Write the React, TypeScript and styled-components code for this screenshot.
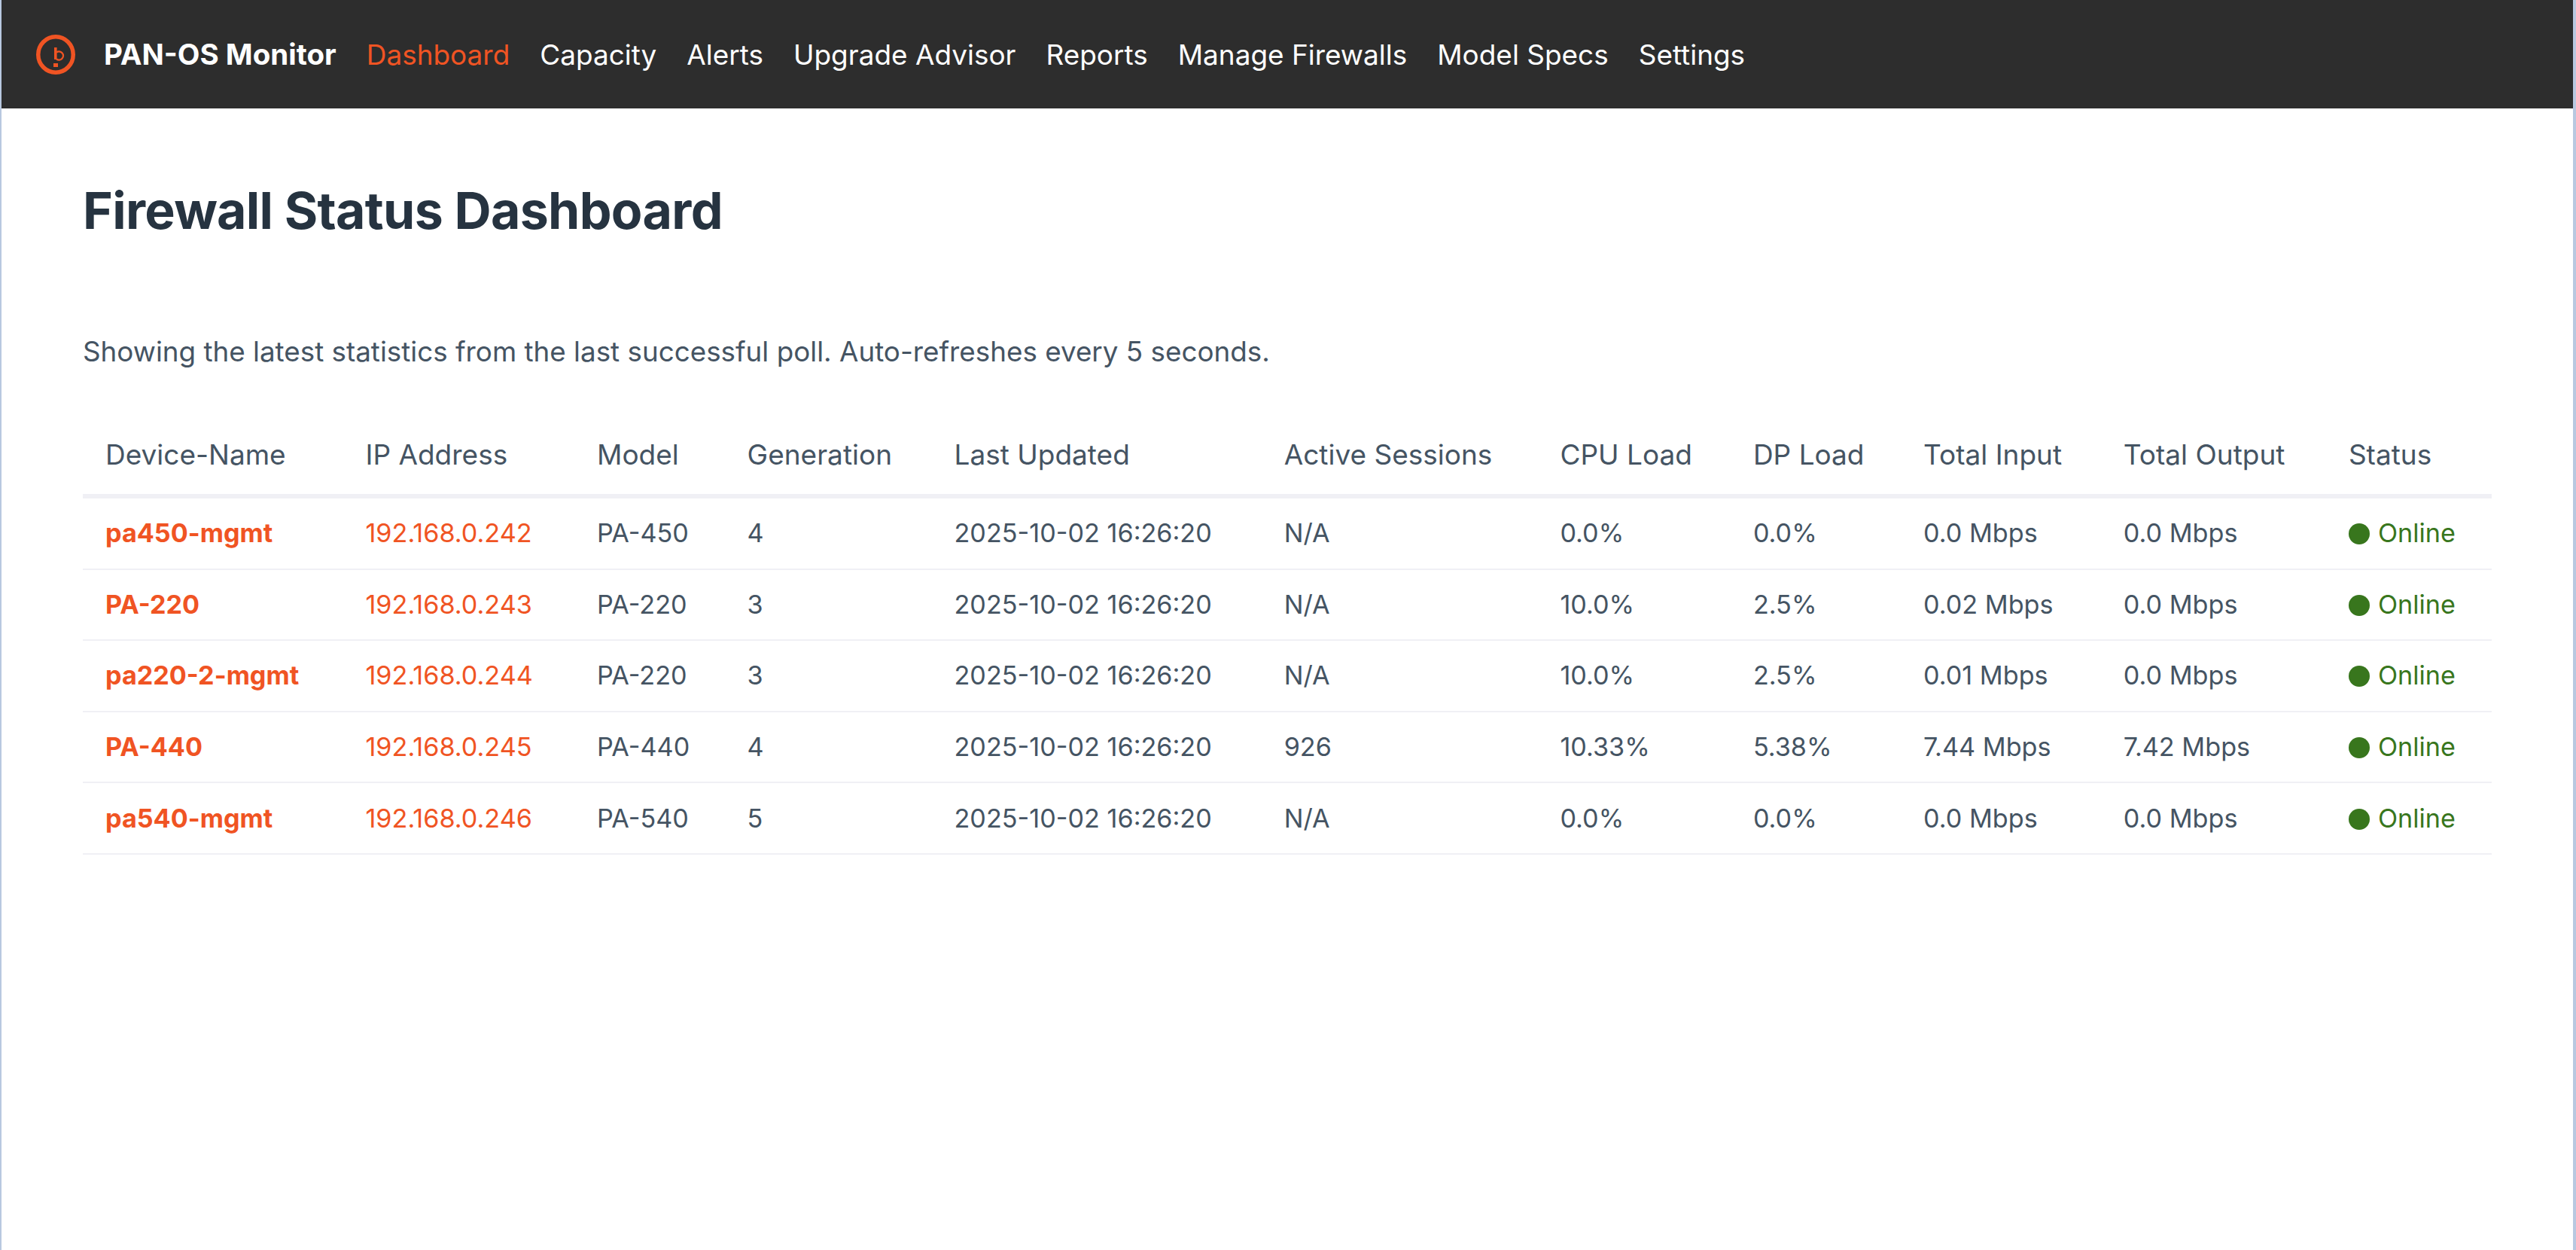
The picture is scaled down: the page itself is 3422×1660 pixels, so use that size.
import * as React from 'react'
import styled, { createGlobalStyle } from 'styled-components'

const ORANGE = '#f05423'
const NAV_LINKS = [
  'Dashboard',
  'Capacity',
  'Alerts',
  'Upgrade Advisor',
  'Reports',
  'Manage Firewalls',
  'Model Specs',
  'Settings',
]
const HEADERS = [
  'Device-Name',
  'IP Address',
  'Model',
  'Generation',
  'Last Updated',
  'Active Sessions',
  'CPU Load',
  'DP Load',
  'Total Input',
  'Total Output',
  'Status',
]
const DEVICES = [
  ['pa450-mgmt', '192.168.0.242', 'PA-450', '4', 'N/A', '0.0%', '0.0%', '0.0 Mbps', '0.0 Mbps'],
  ['PA-220', '192.168.0.243', 'PA-220', '3', 'N/A', '10.0%', '2.5%', '0.02 Mbps', '0.0 Mbps'],
  ['pa220-2-mgmt', '192.168.0.244', 'PA-220', '3', 'N/A', '10.0%', '2.5%', '0.01 Mbps', '0.0 Mbps'],
  ['PA-440', '192.168.0.245', 'PA-440', '4', '926', '10.33%', '5.38%', '7.44 Mbps', '7.42 Mbps'],
  ['pa540-mgmt', '192.168.0.246', 'PA-540', '5', 'N/A', '0.0%', '0.0%', '0.0 Mbps', '0.0 Mbps'],
]

const App: React.FC = () => {
  return (
    <>
      <GlobalStyle />
      <Page>
        <NavBar>
          <Logo viewBox="0 0 52 53" aria-hidden="true">
            <ellipse cx="26" cy="26.5" rx="23.25" ry="23.75" fill="none" stroke={ORANGE} strokeWidth="5.5" />
            <rect x="24" y="17" width="3.6" height="16" fill={ORANGE} />
            <rect x="23" y="38" width="6" height="5" fill={ORANGE} />
            <path d="M27 23.5a5.6 5.6 0 1 1 0 9" fill="none" stroke={ORANGE} strokeWidth="2.4" />
          </Logo>
          <Brand>PAN-OS Monitor</Brand>
          {NAV_LINKS.map((link, i) => (
            <NavLink key={link} $active={i === 0}>
              {link}
            </NavLink>
          ))}
        </NavBar>
        <Main>
          <Title>Firewall Status Dashboard</Title>
          <Intro>Showing the latest statistics from the last successful poll. Auto-refreshes every 5 seconds.</Intro>
          <Table>
            <thead>
              <tr>
                {HEADERS.map((h) => (
                  <HeadCell key={h}>{h}</HeadCell>
                ))}
              </tr>
            </thead>
            <tbody>
              {DEVICES.map((d) => (
                <tr key={d[0]}>
                  <Cell>
                    <DeviceLink>{d[0]}</DeviceLink>
                  </Cell>
                  <Cell>
                    <IpLink>{d[1]}</IpLink>
                  </Cell>
                  <Cell>{d[2]}</Cell>
                  <Cell>{d[3]}</Cell>
                  <Cell>2025-10-02 16:26:20</Cell>
                  <Cell>{d[4]}</Cell>
                  <Cell>{d[5]}</Cell>
                  <Cell>{d[6]}</Cell>
                  <Cell>{d[7]}</Cell>
                  <Cell>{d[8]}</Cell>
                  <Cell>
                    <StatusDot />
                    <StatusText>Online</StatusText>
                  </Cell>
                </tr>
              ))}
            </tbody>
          </Table>
        </Main>
      </Page>
    </>
  )
}

export default App

const GlobalStyle = createGlobalStyle`
  html, body {
    margin: 0;
    padding: 0;
    background: #fff;
  }
  body {
    font-family: Inter, "Liberation Sans", sans-serif;
  }
`

const Page = styled.div`
  box-sizing: border-box;
  width: 3422px;
  height: 1660px;
  overflow: hidden;
  background: #fff;
  border-left: 2px solid #b8c8e0;
  border-right: 4px solid #b8c8e0;
`

const NavBar = styled.nav`
  display: flex;
  align-items: center;
  height: 144px;
  padding-left: 46px;
  background: #2d2d2d;
`

const Logo = styled.svg`
  width: 52px;
  height: 53px;
  margin-right: 38px;
  flex: none;
`

const Brand = styled.span`
  margin-right: 40px;
  font-size: 38.5px;
  font-weight: 700;
  color: #fff;
`

const NavLink = styled.a<{ $active?: boolean }>`
  margin-right: 40px;
  font-size: 36.95px;
  color: ${(p) => (p.$active ? ORANGE : '#fff')};
`

const Main = styled.main`
  padding: 93px 106px 0 108px;
`

const Title = styled.h1`
  margin: 0 0 119px;
  font-size: 68px;
  line-height: 84px;
  font-weight: 700;
  letter-spacing: -0.7px;
  color: #263340;
`

const Intro = styled.p`
  margin: 0 0 60px;
  font-size: 36.8px;
  line-height: 54px;
  color: #455463;
`

const Table = styled.table`
  width: 3200px;
  border-collapse: collapse;
  font-size: 34.2px;
  color: #455463;
`

const HeadCell = styled.th`
  padding: 24px 30px 26px;
  border-bottom: 6px solid #f0f0f5;
  text-align: left;
  font-size: 37px;
  line-height: 52px;
  font-weight: 400;
  white-space: nowrap;
`

const Cell = styled.td`
  padding: 20.3px 30px;
  border-bottom: 2px solid #f0f0f5;
  line-height: 52px;
  white-space: nowrap;
`

const DeviceLink = styled.a`
  font-weight: 700;
  color: ${ORANGE};
`

const IpLink = styled.a`
  color: ${ORANGE};
`

const StatusDot = styled.span`
  display: inline-block;
  width: 28px;
  height: 28px;
  margin-right: 11px;
  border-radius: 50%;
  background: #38761d;
  vertical-align: -3px;
`

const StatusText = styled.span`
  color: #38761d;
`
